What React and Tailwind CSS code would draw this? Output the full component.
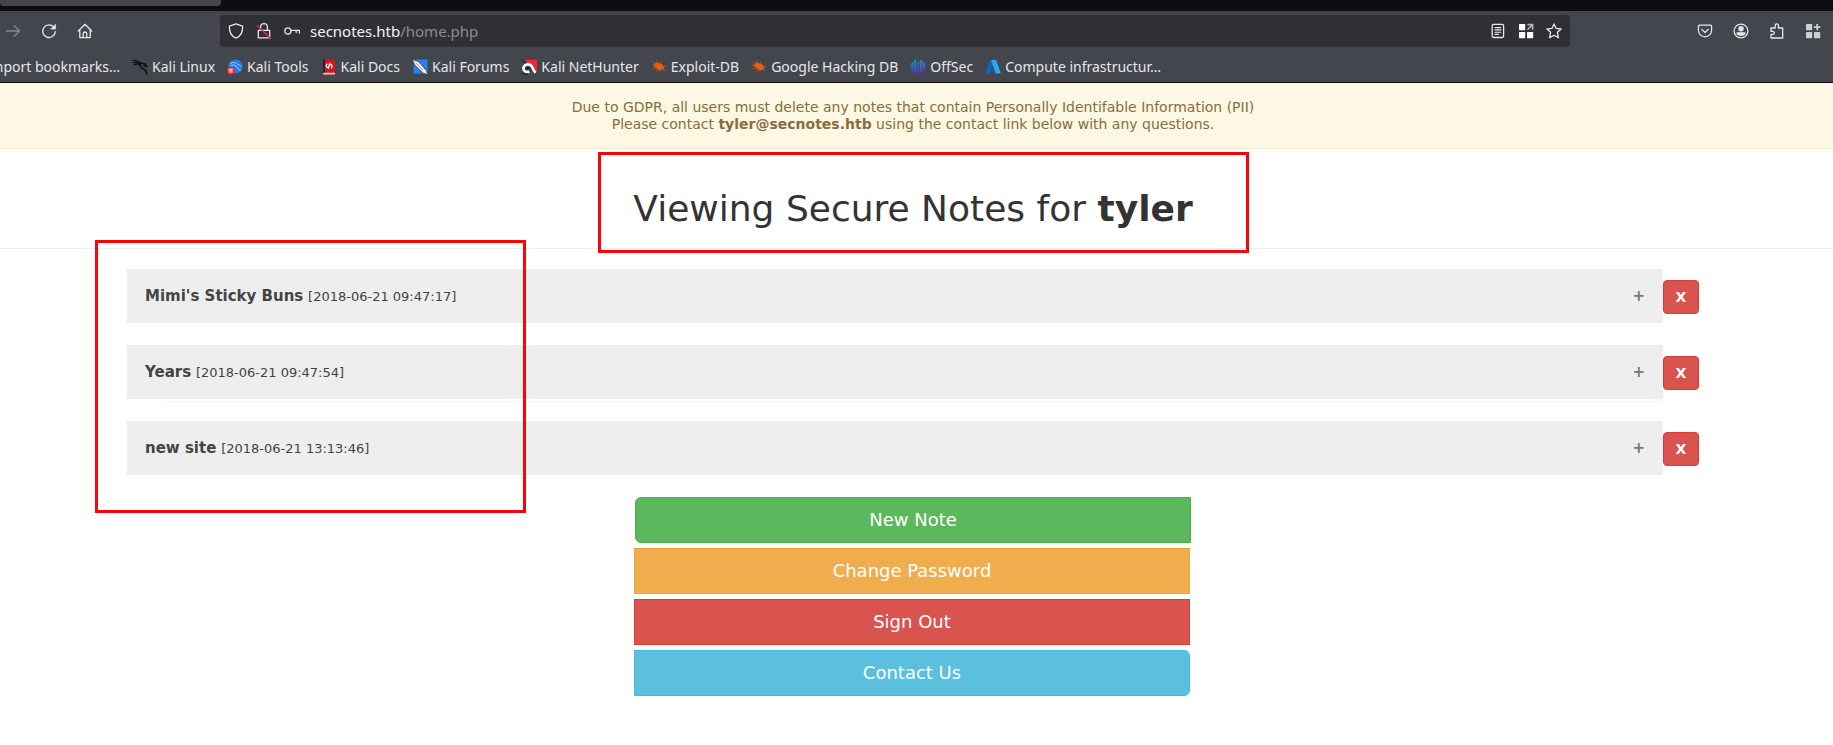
const ui = "font-['Noto_Sans',sans-serif]";

function Stroke({ children, size = 16, className = "text-[#e6e6ea]" }) {
  return (
    <svg width={size} height={size} viewBox="0 0 16 16" fill="none" stroke="currentColor" strokeWidth="1.3" strokeLinecap="round" strokeLinejoin="round" className={`block shrink-0 ${className}`} aria-hidden="true">
      {children}
    </svg>
  );
}

const ArrowIcon = () => (
  <Stroke className="text-[#85878d]"><path d="M1.5 8h13M9.2 2.8 14.5 8l-5.3 5.2" /></Stroke>
);
const ReloadIcon = () => (
  <Stroke>
    <path d="M13.2 4.6A6.300 6.300 0 1 0 14.300 8.600" />
    <path d="M14.6 1.400v4.700H9.900z" fill="currentColor" strokeWidth=".6" />
  </Stroke>
);
const HomeIcon = () => (
  <Stroke><path d="M1.3 8 8 1.3 14.7 8M2.8 6.8v7.8h10.4V6.8M6.2 14.4v-3.600a1.800 1.800 0 0 1 3.600 0v3.600" /></Stroke>
);
const ShieldIcon = () => (
  <Stroke><path d="M8 .9 14.6 3.200c.3 5.300-1.800 9.900-6.600 12-4.800-2.100-6.900-6.700-6.600-12z" /></Stroke>
);
const LockIcon = () => (
  <Stroke>
    <path d="M2.3 7.3h11.4v7.5H2.3zM4.6 7V4a3.400 3.400 0 0 1 6.800 0v3" />
    <path d="M1.2 2.4 14.6 15.4" stroke="#e22850" strokeWidth="1.4" />
  </Stroke>
);
const KeyIcon = () => (
  <Stroke><circle cx="3.9" cy="8" r="3.1" /><path d="M7 7.4h8.4v2.8M12.2 7.4v2.2" /></Stroke>
);
const ReaderIcon = () => (
  <Stroke><rect x="2.2" y="1.3" width="11.4" height="13.2" rx="1.4" /><path d="M5 4.6h5.8M5 6.9h5.8M5 9.2h5.8M5 11.4h3.4" strokeWidth="1.100" /></Stroke>
);
const GridArrowIcon = () => (
  <svg width="16" height="16" viewBox="0 0 16 16" className="block shrink-0" aria-hidden="true">
    <g fill="#fff"><rect x="1" y="1" width="6.2" height="6.2" rx=".6" /><rect x="1" y="9" width="6.2" height="6.2" rx=".6" /><rect x="9" y="9" width="6.2" height="6.2" rx=".6" /></g>
    <path d="M9.4 1.6h5.2v5.2M14.4 1.8 9.4 6.8" fill="none" stroke="#b5b5b9" strokeWidth="1.6" />
  </svg>
);
const StarIcon = () => (
  <Stroke><path d="m8 .9 2.1 4.5 5 .6-3.7 3.3 1 5.500L8 12.300l-4.400 2.500 1-5.500L.9 6l5-.6z" /></Stroke>
);
const PocketIcon = () => (
  <Stroke><path d="M2.4 2.2h11.2a1 1 0 0 1 1 1v4a6.600 6.600 0 0 1-13.200 0v-4a1 1 0 0 1 1-1z" /><path d="M4.8 6.4 8 9.5l3.2-3.1" /></Stroke>
);
const AccountIcon = () => (
  <Stroke><circle cx="8" cy="8" r="6.9" /><circle cx="8" cy="5.8" r="2.1" fill="currentColor" /><path d="M4.2 9.8h7.6v1c-1.800 2.100-5.800 2.100-7.600 0z" fill="currentColor" /></Stroke>
);
const PuzzleIcon = () => (
  <Stroke><path d="M2 15V11.400h1.800a1.500 1.500 0 0 0 0-3H2V5h4.200V2.400a1.600 1.600 0 0 1 3.200 0V5h4.300v10z" /></Stroke>
);
const GridPlusIcon = () => (
  <svg width="16" height="16" viewBox="0 0 16 16" fill="#cfd0d4" className="block shrink-0" aria-hidden="true">
    <rect x="1" y="1" width="6.200" height="6.200" rx=".6" /><rect x="1" y="9" width="6.200" height="6.200" rx=".6" /><rect x="9" y="9" width="6.200" height="6.200" rx=".6" />
    <path d="M11.300 1h1.800v2.200h2.200V5h-2.200v2.200h-1.800V5H9V3.200h2.300z" />
  </svg>
);

function Fav({ children }) {
  return <svg width="16" height="16" viewBox="0 0 16 16" className="block shrink-0" aria-hidden="true">{children}</svg>;
}
const KaliIcon = () => (
  <Fav><g fill="none" stroke="#0c0c0e" strokeLinecap="round"><path d="M.6 1.300C4 1.800 6.800 1.600 9 4.300M1.200 3.600c2.800-.8 5.200-.4 7.200 1.200M2 5.800c2-1.200 4-1.200 5.800-.4" strokeWidth="1.100" /><path d="M8 4.600c3.400-1 5.400.4 6.600 2.600l-2.400-.6M8.200 4.800c-1 3.600 1.600 4.600 4 5.400 1.600.8 2.200 2 2.600 4.600" strokeWidth="1.600" /></g></Fav>
);
const ToolsIcon = () => (
  <Fav><circle cx="8.500" cy="7.500" r="7.100" fill="#2478f0" /><path d="M3 4.500c4-1.800 6-.8 7.500 1 2 .2 3 .9 3.800 2M3.500 6.600c2.200-.9 4-.5 5.500.2-.2 2.600 3 2.200 4.500 5.200" fill="none" stroke="#a9cbff" strokeWidth="1" /><circle cx="3.800" cy="11.600" r="3.800" fill="#e5322e" /><path d="M1.800 10.300h4M2.900 10.300v3.400M4.800 10.300v3.400" stroke="#fff" fill="none" /></Fav>
);
const DocsIcon = () => (
  <Fav><path d="M2 0h12v15.500H2z" fill="#d91414" /><path d="M2 0h2v14H2z" fill="#26224f" /><path d="M2.500 13.800H14v1.700H2z" fill="#d8d0d0" /><path d="M6.300 4.800c-1.400 1.200-1.400 2.800-.2 3.600 1.700.8 1.900-3.400 3.700-3 1.600.4 1.600 2.600.2 3.800M8.700 3.800 7.300 10" fill="none" stroke="#fff" strokeWidth="1.200" /></Fav>
);
const ForumsIcon = () => (
  <Fav><path d="M1.500.5h14v14h-14z" fill="#2384f0" /><path d="M.2.500 6.200 2.400l4.400 4.800 3.800 4.400 1.400 4.200-4.600-1.800-5-4.400L2.800 6z" fill="#f4f4f4" stroke="#26282c" strokeWidth=".7" /><path d="m3.500 3.500 7 7.500" stroke="#666" strokeWidth=".7" /></Fav>
);
const NetHunterIcon = () => (
  <Fav><path d="M3.500.8H16v12.500z" fill="#f02a35" /><path d="M2.300 9.800a4.700 4.700 0 0 1 8.600-2.300c1 2.400 1.900 4.600 3.600 6.300" fill="none" stroke="#fff" strokeWidth="2.600" /><path d="M2.300 9.500c.2 2.800 3.300 4.200 6 3" fill="none" stroke="#fff" strokeWidth="2.600" /><path d="M4.800 10.200c.8-1.600 2.900-1.600 3.900-.2" fill="none" stroke="#161618" strokeWidth="1.500" /><path d="M.6.900 4.200 4M1 14.200c2 1.200 4 1.200 6 .7" fill="none" stroke="#161618" /></Fav>
);
const BugIcon = () => (
  <Fav><ellipse cx="8" cy="7.400" rx="5.400" ry="3.200" transform="rotate(25 8 7.400)" fill="#e8630c" /><path d="M1 6.200 4 7M1.800 2.700 6 5.600M5.400 1.300 8 5.400M9.500 2.400l.4 3.600M15 7.400 11 8M14.300 11.400 10 9.500M9.400 13.600 8 10M5.200 12.400l1.600-3.400M1.600 9.800 6 8.300" fill="none" stroke="#b9591c" strokeWidth=".9" /></Fav>
);
const OffSecIcon = () => (
  <Fav>
    <defs><linearGradient id="osg" gradientUnits="userSpaceOnUse" x1="0" y1="0" x2="0" y2="16"><stop offset="0" stopColor="#12a3a8" /><stop offset=".5" stopColor="#3562c8" /><stop offset="1" stopColor="#5a22d8" /></linearGradient></defs>
    <path d="M6.300.8v14C3.200 13.600.6 11.500.6 7.700S3.200 1.600 6.300.8zM9.700.8v14c3.100-1.200 5.700-3.300 5.700-7.100S12.800 1.600 9.700.8zM7.400 3h1.200v12.500H7.400z" fill="url(#osg)" /><path d="M3.500 2v11M12.500 2v11" stroke="#43464d" strokeWidth=".6" />
  </Fav>
);
const AzureIcon = () => (
  <Fav><path d="M5.400 1h4.400L5.300 14.300H1.200c-.8 0-1-.6-.8-1.200z" fill="#1267b8" /><path d="M4 9.500h6.500l1.500 3-2.500 1.800z" fill="#0f5ba8" /><path d="M6.300 1h4c.5 0 .8.3 1 .8l4.300 11.700c.2.500-.1.900-.7.900h-4.200z" fill="#2ea5ee" /></Fav>
);

const bookmarks = [
  ["Kali Linux", KaliIcon],
  ["Kali Tools", ToolsIcon],
  ["Kali Docs", DocsIcon],
  ["Kali Forums", ForumsIcon],
  ["Kali NetHunter", NetHunterIcon],
  ["Exploit-DB", BugIcon],
  ["Google Hacking DB", BugIcon],
  ["OffSec", OffSecIcon],
  ["Compute infrastructur…", AzureIcon],
];

const notes = [
  ["Mimi's Sticky Buns", "[2018-06-21 09:47:17]"],
  ["Years", "[2018-06-21 09:47:54]"],
  ["new site", "[2018-06-21 13:13:46]"],
];

function IconButton({ label, children }) {
  return <button type="button" aria-label={label} className="shrink-0">{children}</button>;
}

function Browser() {
  return (
    <header className={`${ui} border-b border-[#0c0c10] bg-[#43464d] text-[#e6e6ea]`}>
      <div className="h-[11px] bg-[#0d0e12]"><div className="h-[6px] w-[221px] rounded-b bg-[#43464d]" /></div>
      <div className="flex h-10 items-center pr-3">
        <div className="flex w-[220px] shrink-0 items-center gap-5 pl-[5px]">
          <IconButton label="Forward"><ArrowIcon /></IconButton>
          <IconButton label="Reload"><ReloadIcon /></IconButton>
          <IconButton label="Home"><HomeIcon /></IconButton>
        </div>
        <div className="flex h-8 grow items-center rounded bg-[#2f3035] pr-2 pl-2">
          <div className="flex items-center gap-3">
            <IconButton label="Tracking protection"><ShieldIcon /></IconButton>
            <IconButton label="Connection is not secure"><LockIcon /></IconButton>
            <IconButton label="Saved passwords"><KeyIcon /></IconButton>
          </div>
          <div className="ml-2.5 grow text-[15px] leading-5 text-[#f4f4f6]">secnotes.htb<span className="text-[#8b8c91]">/home.php</span></div>
          <div className="flex items-center gap-3">
            <IconButton label="Reader view"><ReaderIcon /></IconButton>
            <IconButton label="Open container"><GridArrowIcon /></IconButton>
            <IconButton label="Bookmark this page"><StarIcon /></IconButton>
          </div>
        </div>
        <div className="ml-[127px] flex shrink-0 items-center gap-5">
          <IconButton label="Pocket"><PocketIcon /></IconButton>
          <IconButton label="Account"><AccountIcon /></IconButton>
          <IconButton label="Extensions"><PuzzleIcon /></IconButton>
          <IconButton label="Containers"><GridPlusIcon /></IconButton>
        </div>
      </div>
      <nav className="flex h-[31px] items-center gap-3 text-sm leading-5 whitespace-nowrap">
        <a href="#import" className="flex w-[120px] shrink-0 justify-end overflow-hidden">Import bookmarks…</a>
        {bookmarks.map(([name, Icon]) => (
          <a key={name} href="#bookmark" className="flex items-center gap-1"><Icon />{name}</a>
        ))}
      </nav>
    </header>
  );
}

const action = "block border py-[9px] text-center text-lg leading-[26px] text-white";

export default function App() {
  return (
    <div className="bg-white font-['DejaVu_Sans',sans-serif] text-sm text-[#333]">
      <Browser />
      <div className="border-b border-[#faebcc] bg-[#fcf8e3] pt-4 pr-[7px] pb-[15px] text-center leading-[17px] text-[#8a6d3b]">
        <p>Due to GDPR, all users must delete any notes that contain Personally Identifable Information (PII)</p>
        <p>Please contact <strong>tyler@secnotes.htb</strong> using the contact link below with any questions.</p>
      </div>
      <div className="flex justify-center border-b border-[#eee] pt-10 pr-[7px] pb-[19px]">
        <h1 className="relative text-4xl leading-10">
          Viewing Secure Notes for <b>tyler</b>
          <span className="pointer-events-none absolute -top-[37px] -right-14 -bottom-6 -left-[35px] border-3 border-[#fb0408]" />
        </h1>
      </div>
      <main className="pt-5 pr-[134px] pl-[127px]">
        <div className="relative flex flex-col gap-[22px]">
          {notes.map(([title, date]) => (
            <div key={title} className="flex items-center">
              <div className="relative min-w-0 grow">
                <button type="button" aria-expanded="false" className="flex h-[54px] w-full items-center justify-between bg-[#eee] px-[18px] pt-0.5 text-left text-[15px] text-[#444]">
                  <span><b>{title}</b> <span className="text-[13px]">{date}</span></span>
                  <b className="text-[15px] text-[#777]">+</b>
                </button>
                <div className="absolute top-full right-0 left-[37px] mt-[2px] h-px bg-[#f4f4f4]" />
              </div>
              <button type="button" aria-label={`Delete ${title}`} className="h-[34px] w-9 shrink-0 translate-y-px rounded border border-[#d43f3a] bg-[#d9534f] font-bold text-white">X</button>
            </div>
          ))}
          <span className="pointer-events-none absolute -top-[29px] -left-8 h-[273px] w-[431px] border-3 border-[#fb0408]" />
        </div>
        <div className="mx-auto mt-[22px] flex w-[558px] flex-col gap-[5px]">
          <a href="#new" className={`${action} mx-px rounded-l-md border-[#4cae4c] bg-[#5cb85c]`}>New Note</a>
          <a href="#password" className={`${action} mr-0.5 border-[#eea236] bg-[#f0ad4e]`}>Change Password</a>
          <a href="#signout" className={`${action} mr-0.5 border-[#d43f3a] bg-[#d9534f]`}>Sign Out</a>
          <a href="#contact" className={`${action} mr-0.5 rounded-r-md border-[#46b8da] bg-[#5bc0de]`}>Contact Us</a>
        </div>
      </main>
    </div>
  );
}
